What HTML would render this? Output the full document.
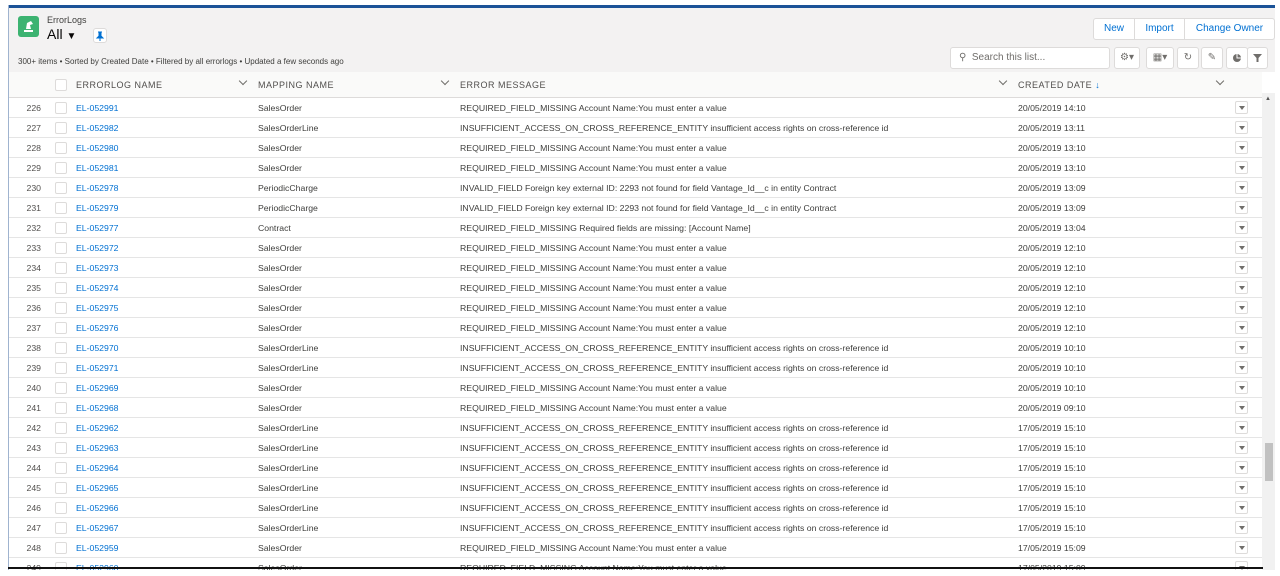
<!DOCTYPE html>
<html><head><meta charset="utf-8"><style>
*{box-sizing:border-box;margin:0;padding:0}
body{width:1280px;height:576px;overflow:hidden;background:#fff;font-family:"Liberation Sans",sans-serif;position:relative;color:#080707}
.abs{position:absolute}
#card{left:8px;top:5px;width:1267px;height:565px;border-left:1px solid #9fb3cf;overflow:hidden;background:#fff}
#bar{left:0;top:0;width:1267px;height:3px;background:#1b5297}
#head{left:0;top:3px;width:1267px;height:64px;background:#f3f2f2}
.btn{position:absolute;background:#fff;border:1px solid #dddbda;border-radius:3px;font-size:10px;color:#0070d2}
.ib{position:absolute;top:39px;height:22px;background:#fff;border:1px solid #dddbda;border-radius:3px;color:#706e6b;font-size:10px;text-align:center;line-height:20px}
#colh{left:0;top:67px;width:1253px;height:26px;background:#fafaf9;border-bottom:1px solid #dddbda;font-size:9px;letter-spacing:.5px;color:#514f4d}
.row{position:absolute;left:0;width:1253px;height:20px;border-bottom:1px solid #e5e5e5;font-size:8.7px;color:#3e3e3c}
.row span{position:absolute;top:5px;white-space:nowrap}
.n{right:1221px;text-align:right;color:#514f4d}
.cb{position:absolute;left:46px;top:4px;width:12px;height:12px;border:1px solid #dddbda;border-radius:2px;background:#fff}
.l{left:67px;color:#0070d2}
.m{left:249px}.e{left:451px}.d{left:1009px}
.dd{position:absolute;left:1226px;top:3px;width:13px;height:13px;border:1px solid #dddbda;border-radius:2px;background:#fff}
.dd:after{content:"";position:absolute;left:3px;top:4px;border-left:3px solid transparent;border-right:3px solid transparent;border-top:4px solid #706e6b}
.hc{position:absolute;top:8px}
.chev{position:absolute;top:6px;width:6px;height:6px;border-right:1px solid #706e6b;border-bottom:1px solid #706e6b;transform:rotate(45deg)}
</style></head><body>
<div id="card" class="abs">
<div id="bar" class="abs"></div>
<div id="head" class="abs">
 <div class="abs" style="left:9px;top:8px;width:21px;height:21px;background:#3cb371;border-radius:3px"><svg width="21" height="21"><path d="M6 16h9v-2H6z M8 13l1-6 4-2 2 3-3 1 1 4z" fill="#fff"/></svg></div>
 <div class="abs" style="left:38px;top:7px;font-size:9px;color:#3e3e3c">ErrorLogs</div>
 <div class="abs" style="left:38px;top:18px;font-size:14px;color:#080707">All <span style="font-size:10px">&#9660;</span></div>
 <div class="abs" style="left:84px;top:20px;width:14px;height:15px;background:#fff;border:1px solid #dddbda;border-radius:3px"><svg width="12" height="13"><path d="M4 3h4M5 3v4l-2 2h6L7 7V3M6 9v3" stroke="#0070d2" fill="#0070d2" stroke-width="1"/></svg></div>
 <div class="abs" style="left:9px;top:49px;font-size:8px;color:#3e3e3c">300+ items • Sorted by Created Date • Filtered by all errorlogs • Updated a few seconds ago</div>
 <div class="btn" style="left:1084px;top:10px;width:42px;height:22px;line-height:20px;text-align:center;border-radius:3px 0 0 3px">New</div>
 <div class="btn" style="left:1125px;top:10px;width:51px;height:22px;line-height:20px;text-align:center;border-radius:0">Import</div>
 <div class="btn" style="left:1175px;top:10px;width:91px;height:22px;line-height:20px;text-align:center;border-radius:0 3px 3px 0">Change Owner</div>
 <div class="ib" style="left:941px;width:160px;text-align:left;padding-left:8px;color:#706e6b">&#9906; &nbsp;Search this list...</div>
 <div class="ib" style="left:1105px;width:26px">&#9881;&#9662;</div>
 <div class="ib" style="left:1137px;width:28px">&#9638;&#9662;</div>
 <div class="ib" style="left:1168px;width:22px">&#8635;</div>
 <div class="ib" style="left:1192px;width:22px">&#9998;</div>
 <div class="ib" style="left:1217px;width:22px"><svg width="20" height="20"><circle cx="10" cy="10" r="4" fill="#706e6b"/><path d="M10 6v4h4" stroke="#fff" fill="none"/></svg></div>
 <div class="ib" style="left:1238px;width:21px"><svg width="19" height="20"><path d="M5 6h9l-3.5 4v4h-2v-4z" fill="#706e6b"/></svg></div>
</div>
<div id="colh" class="abs">
 <div class="cb" style="top:7px"></div>
 <span class="hc" style="left:67px">ERRORLOG NAME</span><div class="chev" style="left:231px"></div>
 <span class="hc" style="left:249px">MAPPING NAME</span><div class="chev" style="left:433px"></div>
 <span class="hc" style="left:451px">ERROR MESSAGE</span><div class="chev" style="left:991px"></div>
 <span class="hc" style="left:1009px">CREATED DATE <span style="color:#0070d2">&#8595;</span></span><div class="chev" style="left:1208px"></div>
</div>
<div id="rows"></div>
<div class="abs" style="left:1253px;top:88px;width:13px;height:477px;background:#f1f1f1"></div>
<div class="abs" style="left:1256px;top:438px;width:8px;height:38px;background:#c1c1c1"></div>
<div class="abs" style="left:1256px;top:91px;font-size:6px;color:#555">&#9650;</div>
</div>
<div class="abs" style="left:8px;top:567px;width:1255px;height:2px;background:#111"></div>
<script>
var d=[
["EL-052991","SalesOrder","R","20/05/2019 14:10"],
["EL-052982","SalesOrderLine","I","20/05/2019 13:11"],
["EL-052980","SalesOrder","R","20/05/2019 13:10"],
["EL-052981","SalesOrder","R","20/05/2019 13:10"],
["EL-052978","PeriodicCharge","V","20/05/2019 13:09"],
["EL-052979","PeriodicCharge","V","20/05/2019 13:09"],
["EL-052977","Contract","C","20/05/2019 13:04"],
["EL-052972","SalesOrder","R","20/05/2019 12:10"],
["EL-052973","SalesOrder","R","20/05/2019 12:10"],
["EL-052974","SalesOrder","R","20/05/2019 12:10"],
["EL-052975","SalesOrder","R","20/05/2019 12:10"],
["EL-052976","SalesOrder","R","20/05/2019 12:10"],
["EL-052970","SalesOrderLine","I","20/05/2019 10:10"],
["EL-052971","SalesOrderLine","I","20/05/2019 10:10"],
["EL-052969","SalesOrder","R","20/05/2019 10:10"],
["EL-052968","SalesOrder","R","20/05/2019 09:10"],
["EL-052962","SalesOrderLine","I","17/05/2019 15:10"],
["EL-052963","SalesOrderLine","I","17/05/2019 15:10"],
["EL-052964","SalesOrderLine","I","17/05/2019 15:10"],
["EL-052965","SalesOrderLine","I","17/05/2019 15:10"],
["EL-052966","SalesOrderLine","I","17/05/2019 15:10"],
["EL-052967","SalesOrderLine","I","17/05/2019 15:10"],
["EL-052959","SalesOrder","R","17/05/2019 15:09"],
["EL-052960","SalesOrder","R","17/05/2019 15:09"]];
var M={R:"REQUIRED_FIELD_MISSING Account Name:You must enter a value",I:"INSUFFICIENT_ACCESS_ON_CROSS_REFERENCE_ENTITY insufficient access rights on cross-reference id",V:"INVALID_FIELD Foreign key external ID: 2293 not found for field Vantage_Id__c in entity Contract",C:"REQUIRED_FIELD_MISSING Required fields are missing: [Account Name]"};
var h="";d.forEach(function(r,i){h+='<div class="row" style="top:'+(93+i*20)+'px"><span class="n">'+(226+i)+'</span><div class="cb"></div><span class="l">'+r[0]+'</span><span class="m">'+r[1]+'</span><span class="e">'+M[r[2]]+'</span><span class="d">'+r[3]+'</span><div class="dd"></div></div>'});
document.getElementById("rows").innerHTML=h;
</script>
</body></html>
